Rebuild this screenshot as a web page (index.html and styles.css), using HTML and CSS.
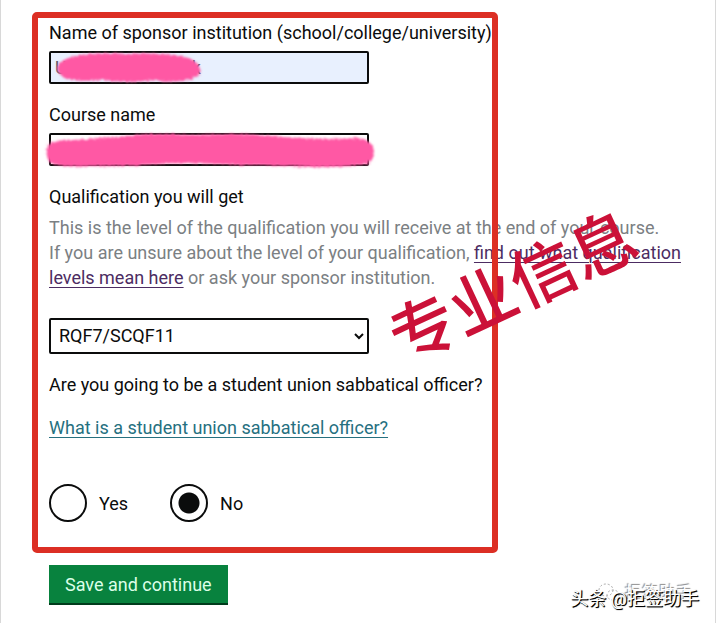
FILE: index.html
```html
<!DOCTYPE html>
<html lang="en">
<head>
    <meta charset="UTF-8">
    <meta name="viewport" content="width=device-width, initial-scale=1.0">
    <title>Course details</title>
    <link rel="stylesheet" href="styles.css">
</head>
<body>
    <main class="page">
        <form class="course-form" id="course-form">
            <div class="form-group">
                <label for="sponsor">Name of sponsor institution (school/college/university)</label>
                <div class="field">
                    <input class="input input-filled" type="text" id="sponsor" value="U                            k">
                    <svg class="scribble scribble-short" viewBox="0 0 160 40" aria-hidden="true">
                        <defs>
                            <filter id="rough" x="-5%" y="-20%" width="110%" height="140%">
                                <feTurbulence type="fractalNoise" baseFrequency="0.5" numOctaves="2" seed="4" result="noise"/>
                                <feDisplacementMap in="SourceGraphic" in2="noise" scale="5" result="edge"/>
                                <feGaussianBlur in="edge" stdDeviation="0.8"/>
                            </filter>
                        </defs>
                        <path filter="url(#rough)" fill="#ff58a4" d="M10 15 Q18 6 42 5 Q60 3 78 5 Q100 3 132 7 Q147 10 151 18 Q153 26 142 30 Q128 35 106 31 Q78 35 54 31 Q32 33 18 30 Q5 24 10 15Z"/>
                    </svg>
                </div>
            </div>

            <div class="form-group">
                <label for="course">Course name</label>
                <div class="field">
                    <input class="input" type="text" id="course">
                    <svg class="scribble scribble-long" viewBox="0 0 340 40" aria-hidden="true">
                        <path filter="url(#rough)" fill="#ff58a4" d="M6 14 Q8 9 30 9 Q60 7 86 5 Q110 1 150 4 Q205 1 240 6 Q280 9 318 7 Q331 10 332 20 Q332 34 318 34 Q294 37 268 36 Q230 34 196 34 Q150 31 112 33 Q84 36 48 35 Q20 37 8 32 Q2 22 6 14Z"/>
                    </svg>
                </div>
            </div>

            <div class="form-group">
                <label for="qualification">Qualification you will get</label>
                <p class="hint" id="qualification-hint">This is the level of the qualification you will receive at the end of your course.<br>If you are unsure about the level of your qualification, <a class="visited" href="#">find out what qualification levels mean here</a> or ask your sponsor institution.</p>
                <select class="select" id="qualification" aria-describedby="qualification-hint">
                    <option>RQF7/SCQF11</option>
                </select>
            </div>

            <fieldset class="form-group">
                <legend>Are you going to be a student union sabbatical officer?</legend>
                <a class="help-link" href="#">What is a student union sabbatical officer?</a>
                <div class="radios">
                    <label class="radio" for="officer-yes">
                        <input type="radio" name="officer" id="officer-yes">
                        <span>Yes</span>
                    </label>
                    <label class="radio" for="officer-no">
                        <input type="radio" name="officer" id="officer-no" checked>
                        <span>No</span>
                    </label>
                </div>
            </fieldset>

            <div class="frame"></div>
            <div class="note" lang="zh">专业信息</div>
        </form>

        <button class="button" type="submit" form="course-form">Save and continue</button>

        <div class="ghost" lang="zh">
            <svg width="24" height="20" viewBox="0 0 24 20" aria-hidden="true">
                <g fill="none" stroke="#aaa" stroke-dasharray="2 2">
                    <ellipse cx="9" cy="7" rx="7" ry="6"/>
                    <ellipse cx="16" cy="12" rx="6" ry="5"/>
                </g>
            </svg>
            <span>拒签助手</span>
        </div>
        <div class="watermark" lang="zh">头条 @拒签助手</div>
    </main>
</body>
</html>
```

FILE: styles.css
```css
* {
    box-sizing: border-box;
}

body {
    margin: 0;
    background: #fff;
    color: #0b0c0c;
    font-family: Roboto, "Noto Sans CJK SC", sans-serif;
    font-size: 18px;
    line-height: 25px;
}

.page {
    position: relative;
    min-height: 100vh;
    padding: 20px 16px 18px 48px;
    border-left: 1px solid #d8d8d8;
    border-right: 1px solid #d8d8d8;
}

.course-form {
    position: relative;
    display: flex;
    flex-direction: column;
    gap: 18px;
}

.form-group {
    min-width: 0;
    margin: 0;
    padding: 0;
    border: 0;
}

.form-group > label,
legend {
    display: block;
    padding: 0;
    white-space: nowrap;
}

.field {
    position: relative;
    max-width: 320px;
    margin-top: 6px;
}

.input,
.select {
    display: block;
    width: 100%;
    max-width: 320px;
    border: 2px solid #0b0c0c;
    border-radius: 2px;
    background: #fff;
    color: #0b0c0c;
    font: inherit;
}

.input {
    height: 33px;
    padding: 0 4px;
}

.input-filled {
    background: #e8f0fe;
    color: #555b66;
}

.select {
    height: 36px;
    padding: 0 4px 2px;
}

.hint {
    margin: 6px 0 28px;
    color: #7b8083;
}

.visited {
    color: #4c2c62;
}

.help-link {
    display: inline-block;
    margin-top: 18px;
    color: #26707f;
}

a {
    text-underline-offset: 3px;
    text-decoration-thickness: 1px;
}

.radios {
    display: flex;
    gap: 42px;
    margin-top: 44px;
}

.radio {
    display: flex;
    align-items: center;
    gap: 12px;
}

.radio input {
    appearance: none;
    width: 38px;
    height: 38px;
    margin: 0;
    border: 2px solid #0b0c0c;
    border-radius: 50%;
}

.radio input:checked {
    background: radial-gradient(circle, #0b0c0c 10px, transparent 11px);
}

.button {
    display: block;
    height: 40px;
    margin-top: 43px;
    padding: 0 16px;
    border: 0;
    border-bottom: 2px solid #003c1c;
    background: #08823e;
    color: #dcffe8;
    font: inherit;
}

/* marks drawn over the form */
.scribble {
    position: absolute;
    height: 40px;
    pointer-events: none;
}

.scribble-short {
    top: -2px;
    left: 0;
    width: 160px;
}

.scribble-long {
    top: -2px;
    left: -7px;
    width: 340px;
}

.frame {
    position: absolute;
    top: -8px;
    bottom: -31px;
    left: -17px;
    width: 466px;
    border: 6px solid #dc2f24;
    border-radius: 5px;
    pointer-events: none;
}

.note {
    position: absolute;
    top: 234px;
    left: 333px;
    color: #cb1138;
    font-size: 66px;
    font-weight: 500;
    line-height: 70px;
    white-space: nowrap;
    transform: rotate(-25deg);
    pointer-events: none;
}

.watermark,
.ghost {
    position: absolute;
    white-space: nowrap;
    pointer-events: none;
}

.watermark {
    right: 16px;
    bottom: 12px;
    color: #fff;
    font-size: 18px;
    text-shadow: 1px 1px 1px #000, 1px 1px 0 #111;
}

.ghost {
    display: flex;
    align-items: center;
    gap: 4px;
    right: 22px;
    bottom: 20px;
    color: #fff;
    font-size: 17px;
    line-height: 20px;
    text-shadow: -1px -1px 1px #888;
}
```
